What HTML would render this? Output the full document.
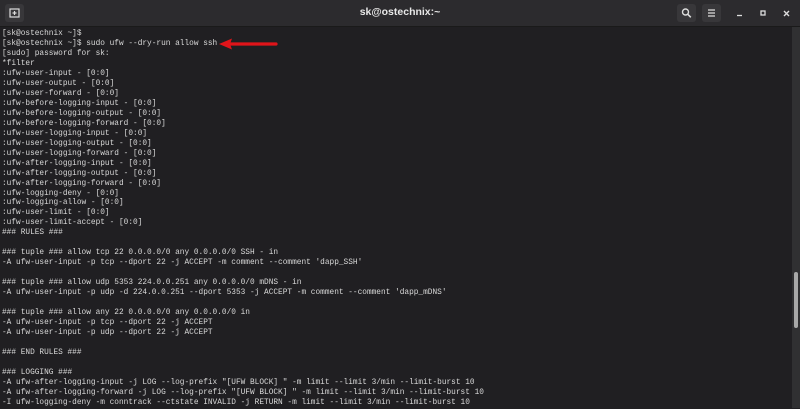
<!DOCTYPE html>
<html><head><style>
html,body{margin:0;padding:0;width:800px;height:408px;overflow:hidden;background:#201f22;}
.tb{position:absolute;left:0;top:0;width:800px;height:26px;background:#2c2b2e;border-bottom:1px solid #1a1a1a;}
.title{position:absolute;left:0;width:800px;top:6px;text-align:center;color:#e8e8e8;font:bold 10.5px "Liberation Sans",sans-serif;}
.btn{position:absolute;top:4px;width:19px;height:18px;background:#38373a;border-radius:3px;}
pre{position:absolute;left:2px;top:30px;margin:0;color:#d8d8d8;font:7.8px/9.97px "Liberation Mono",monospace;white-space:pre;}
.sb{position:absolute;left:792px;top:27px;width:8px;height:381px;background:#303032;}
.th{position:absolute;left:794px;top:272px;width:4px;height:56px;background:#a8a8a8;border-radius:2px;}
</style></head><body>
<div class="tb">
<div class="btn" style="left:5px;"><svg width="19" height="18"><rect x="5" y="5" width="9" height="8" fill="none" stroke="#ddd" stroke-width="1.2"/><path d="M9.5 7v4M7.5 9h4" stroke="#ddd" stroke-width="1.2"/></svg></div>
<div class="title">sk@ostechnix:~</div>
<div class="btn" style="left:677px;"><svg width="19" height="18"><circle cx="8.5" cy="8" r="3" fill="none" stroke="#ddd" stroke-width="1.4"/><path d="M10.8 10.3l3 3" stroke="#ddd" stroke-width="1.5"/></svg></div>
<div class="btn" style="left:702px;"><svg width="19" height="18"><path d="M6 6h7M6 9h7M6 12h7" stroke="#ddd" stroke-width="1.3"/></svg></div>
<svg style="position:absolute;left:730px;top:0" width="70" height="26"><path d="M7 15.5h5" stroke="#ddd" stroke-width="1.3"/><rect x="31" y="11" width="4" height="4" fill="none" stroke="#ddd" stroke-width="1.3"/><path d="M54 11l5 5M59 11l-5 5" stroke="#ddd" stroke-width="1.4"/></svg>
</div>
<pre>[sk@ostechnix ~]$
[sk@ostechnix ~]$ sudo ufw --dry-run allow ssh
[sudo] password for sk:
*filter
:ufw-user-input - [0:0]
:ufw-user-output - [0:0]
:ufw-user-forward - [0:0]
:ufw-before-logging-input - [0:0]
:ufw-before-logging-output - [0:0]
:ufw-before-logging-forward - [0:0]
:ufw-user-logging-input - [0:0]
:ufw-user-logging-output - [0:0]
:ufw-user-logging-forward - [0:0]
:ufw-after-logging-input - [0:0]
:ufw-after-logging-output - [0:0]
:ufw-after-logging-forward - [0:0]
:ufw-logging-deny - [0:0]
:ufw-logging-allow - [0:0]
:ufw-user-limit - [0:0]
:ufw-user-limit-accept - [0:0]
### RULES ###

### tuple ### allow tcp 22 0.0.0.0/0 any 0.0.0.0/0 SSH - in
-A ufw-user-input -p tcp --dport 22 -j ACCEPT -m comment --comment 'dapp_SSH'

### tuple ### allow udp 5353 224.0.0.251 any 0.0.0.0/0 mDNS - in
-A ufw-user-input -p udp -d 224.0.0.251 --dport 5353 -j ACCEPT -m comment --comment 'dapp_mDNS'

### tuple ### allow any 22 0.0.0.0/0 any 0.0.0.0/0 in
-A ufw-user-input -p tcp --dport 22 -j ACCEPT
-A ufw-user-input -p udp --dport 22 -j ACCEPT

### END RULES ###

### LOGGING ###
-A ufw-after-logging-input -j LOG --log-prefix "[UFW BLOCK] " -m limit --limit 3/min --limit-burst 10
-A ufw-after-logging-forward -j LOG --log-prefix "[UFW BLOCK] " -m limit --limit 3/min --limit-burst 10
-I ufw-logging-deny -m conntrack --ctstate INVALID -j RETURN -m limit --limit 3/min --limit-burst 10</pre>
<svg style="position:absolute;left:218px;top:37px" width="62" height="14"><path d="M8 7H58" stroke="#e0141a" stroke-width="3.2" stroke-linecap="round"/><path d="M1 7L14 1.5L12 7L14 12.5Z" fill="#e0141a"/></svg>
<div class="sb"></div><div class="th"></div>
</body></html>
